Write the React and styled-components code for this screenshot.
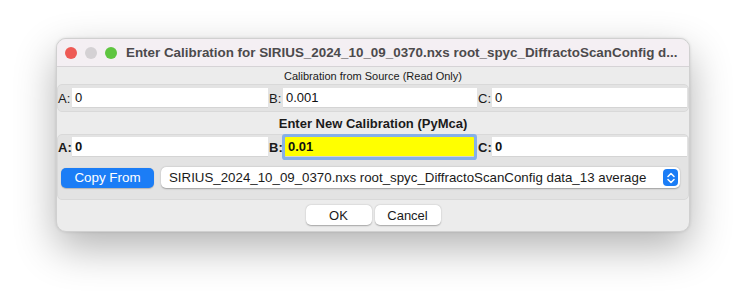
import React from 'react'
import styled, { createGlobalStyle } from 'styled-components'

const Global = createGlobalStyle`
  html, body, #root {
    height: 100%;
  }
  body {
    margin: 0;
    background: #ffffff;
    font-family: 'Liberation Sans', Arial, sans-serif;
  }
`

function Field({ label, value, bold, highlight }) {
  return (
    <FieldWrap>
      <FieldLabel $bold={bold}>{label}</FieldLabel>
      <Input $bold={bold} $highlight={highlight}>{value}</Input>
    </FieldWrap>
  )
}

function App() {
  return (
    <Page>
      <Global />
      <Window>
        <TitleBar>
          <Lights>
            <Light $color="#ee5a55" />
            <Light $color="#d4d1d4" />
            <Light $color="#5fc540" />
          </Lights>
          <Title>Enter Calibration for SIRIUS_2024_10_09_0370.nxs root_spyc_DiffractoScanConfig d...</Title>
        </TitleBar>
        <Body>
          <SectionLabel>Calibration from Source (Read Only)</SectionLabel>
          <Group>
            <Row>
              <Field label="A:" value="0" />
              <Field label="B:" value="0.001" />
              <Field label="C:" value="0" />
            </Row>
          </Group>
          <SectionLabel $bold>Enter New Calibration (PyMca)</SectionLabel>
          <Group $tall>
            <Row>
              <Field label="A:" value="0" bold />
              <Field label="B:" value="0.01" bold highlight />
              <Field label="C:" value="0" bold />
            </Row>
            <CopyRow>
              <CopyButton>Copy From</CopyButton>
              <Combo>
                <span>SIRIUS_2024_10_09_0370.nxs root_spyc_DiffractoScanConfig data_13 average</span>
                <Stepper>
                  <svg width="8" height="14" viewBox="0 0 8 14">
                    <path d="M1 5.5 L4 2.5 L7 5.5 M1 8.5 L4 11.5 L7 8.5" fill="none" stroke="#fff" strokeWidth="1.5" strokeLinecap="round" strokeLinejoin="round" />
                  </svg>
                </Stepper>
              </Combo>
            </CopyRow>
          </Group>
          <Footer>
            <Button>OK</Button>
            <Button>Cancel</Button>
          </Footer>
        </Body>
      </Window>
    </Page>
  )
}

export default App

const Page = styled.div`
  min-height: 100%;
  padding: 38px 0 0 56px;
  box-sizing: border-box;
  background: #ffffff;
`

const Window = styled.div`
  width: 634px;
  height: 194px;
  box-sizing: border-box;
  border-radius: 10px;
  background: #ececec;
  border: 1px solid #d0d0d0;
  box-shadow: 0 16px 42px rgba(0, 0, 0, 0.3), 0 0 3px rgba(0, 0, 0, 0.12);
  overflow: hidden;
  display: flex;
  flex-direction: column;
`

const TitleBar = styled.div`
  height: 27px;
  flex-shrink: 0;
  background: #f4eff3;
  border-bottom: 1px solid #d6d3d6;
  display: flex;
  align-items: center;
  padding-left: 8px;
`

const Lights = styled.div`
  display: flex;
  gap: 8px;
  margin-right: 9px;
`

const Light = styled.div`
  width: 12px;
  height: 12px;
  border-radius: 50%;
  background: ${p => p.$color};
`

const Title = styled.div`
  font-size: 13.4px;
  font-weight: bold;
  color: #4c4a4c;
  white-space: nowrap;
`

const Body = styled.div`
  display: flex;
  flex-direction: column;
`

const SectionLabel = styled.div`
  height: ${p => (p.$bold ? '22px' : '17px')};
  display: flex;
  align-items: center;
  justify-content: center;
  font-size: ${p => (p.$bold ? '13px' : '11px')};
  font-weight: ${p => (p.$bold ? 'bold' : 'normal')};
  color: #1a1a1a;
`

const Group = styled.div`
  background: #e3e3e3;
  border: 1px solid #d9d9d9;
  border-radius: 5px;
  padding: ${p => (p.$tall ? '2px 0 11px' : '3px 0')};
  display: flex;
  flex-direction: column;
  gap: 10px;
`

const Row = styled.div`
  display: grid;
  grid-template-columns: 211px 209px 1fr;
`

const FieldWrap = styled.div`
  display: flex;
  align-items: center;
`

const FieldLabel = styled.span`
  width: 14px;
  font-size: 13px;
  font-weight: ${p => (p.$bold ? 'bold' : 'normal')};
  color: #1a1a1a;
  white-space: nowrap;
`

const Input = styled.div`
  flex: 1;
  height: 20px;
  margin-right: 1px;
  box-sizing: border-box;
  padding: 2px 3px 0;
  font-size: 13px;
  font-weight: ${p => (p.$bold ? 'bold' : 'normal')};
  color: #111;
  background: ${p => (p.$highlight ? '#ffff00' : '#ffffff')};
  border-bottom: 1px solid #d4d4d4;
  box-shadow: ${p => (p.$highlight ? '0 0 0 3px #86b0e8' : 'none')};
  border-radius: ${p => (p.$highlight ? '1px' : '0')};
  ${p => p.$highlight && 'margin: 0 4px 0 2px;'}
`

const CopyRow = styled.div`
  display: flex;
  align-items: center;
  gap: 7px;
  padding: 0 8px 0 3px;
`

const CopyButton = styled.div`
  width: 93px;
  height: 20px;
  border-radius: 5px;
  background: #1b7df6;
  color: #fff;
  font-size: 13.4px;
  display: flex;
  align-items: center;
  justify-content: center;
  box-shadow: 0 0.5px 1px rgba(0, 0, 0, 0.2);
`

const Combo = styled.div`
  flex: 1;
  height: 21px;
  box-sizing: border-box;
  background: #fff;
  border-radius: 5px;
  box-shadow: 0 0.5px 1.5px rgba(0, 0, 0, 0.3);
  display: flex;
  align-items: center;
  justify-content: space-between;
  padding: 0 2px 0 8px;
  font-size: 13.3px;
  color: #1a1a1a;
  white-space: nowrap;
`

const Stepper = styled.div`
  width: 15px;
  height: 17px;
  border-radius: 4px;
  background: #1b7df6;
  display: flex;
  align-items: center;
  justify-content: center;
`

const Footer = styled.div`
  display: flex;
  justify-content: center;
  gap: 3px;
  padding-top: 5px;
`

const Button = styled.div`
  width: 66px;
  height: 20px;
  border-radius: 5px;
  background: #fff;
  box-shadow: 0 0.5px 1.5px rgba(0, 0, 0, 0.3);
  font-size: 13px;
  color: #1a1a1a;
  display: flex;
  align-items: center;
  justify-content: center;
`
